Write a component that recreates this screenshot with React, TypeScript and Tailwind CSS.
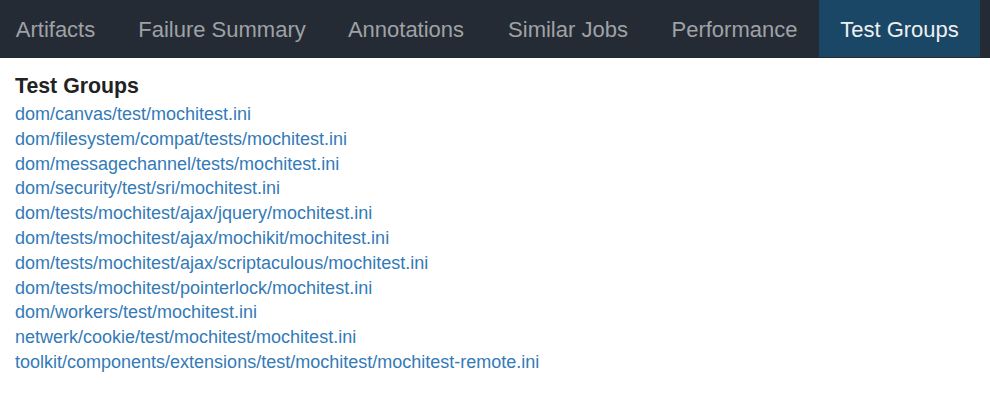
const TABS = [
  { label: 'Artifacts', w: 'w-[125px]' },
  { label: 'Failure Summary', w: 'w-[208px]' },
  { label: 'Annotations', w: 'w-[160px]' },
  { label: 'Similar Jobs', w: 'w-[164px]' },
  { label: 'Performance', w: 'w-[169px]' },
  { label: 'Test Groups', w: 'w-[161px]' },
];

const GROUPS = [
  'dom/canvas/test/mochitest.ini',
  'dom/filesystem/compat/tests/mochitest.ini',
  'dom/messagechannel/tests/mochitest.ini',
  'dom/security/test/sri/mochitest.ini',
  'dom/tests/mochitest/ajax/jquery/mochitest.ini',
  'dom/tests/mochitest/ajax/mochikit/mochitest.ini',
  'dom/tests/mochitest/ajax/scriptaculous/mochitest.ini',
  'dom/tests/mochitest/pointerlock/mochitest.ini',
  'dom/workers/test/mochitest.ini',
  'netwerk/cookie/test/mochitest/mochitest.ini',
  'toolkit/components/extensions/test/mochitest/mochitest-remote.ini',
];

export default function App() {
  return (
    <div className="w-[990px] h-[396px] bg-white font-['Liberation_Sans',Arial,sans-serif]">
      <nav className="flex h-[58px] bg-[#252b34]">
        <ul className="flex -ml-[7px]">
          {TABS.map((tab) => {
            const active = tab.label === 'Test Groups';
            return (
              <li
                key={tab.label}
                className={
                  active
                    ? `flex items-center justify-center ${tab.w} h-[57px] pt-[1px] bg-[#1b4766] text-[22px] text-[#eef0f2]`
                    : `flex items-center justify-center ${tab.w} h-[57px] pt-[1px] text-[22px] text-[#9ea2a6]`
                }
              >
                {tab.label}
              </li>
            );
          })}
        </ul>
      </nav>
      <div className="px-[15px] pt-[15px]">
        <h3 className="text-[21.3px] font-bold leading-[26px] text-[#222]">Test Groups</h3>
        <ul className="mt-[3px]">
          {GROUPS.map((g) => (
            <li key={g} className="text-[18px] leading-[24.8px]">
              <a href="#" className="text-[#337ab7]">
                {g}
              </a>
            </li>
          ))}
        </ul>
      </div>
    </div>
  );
}
